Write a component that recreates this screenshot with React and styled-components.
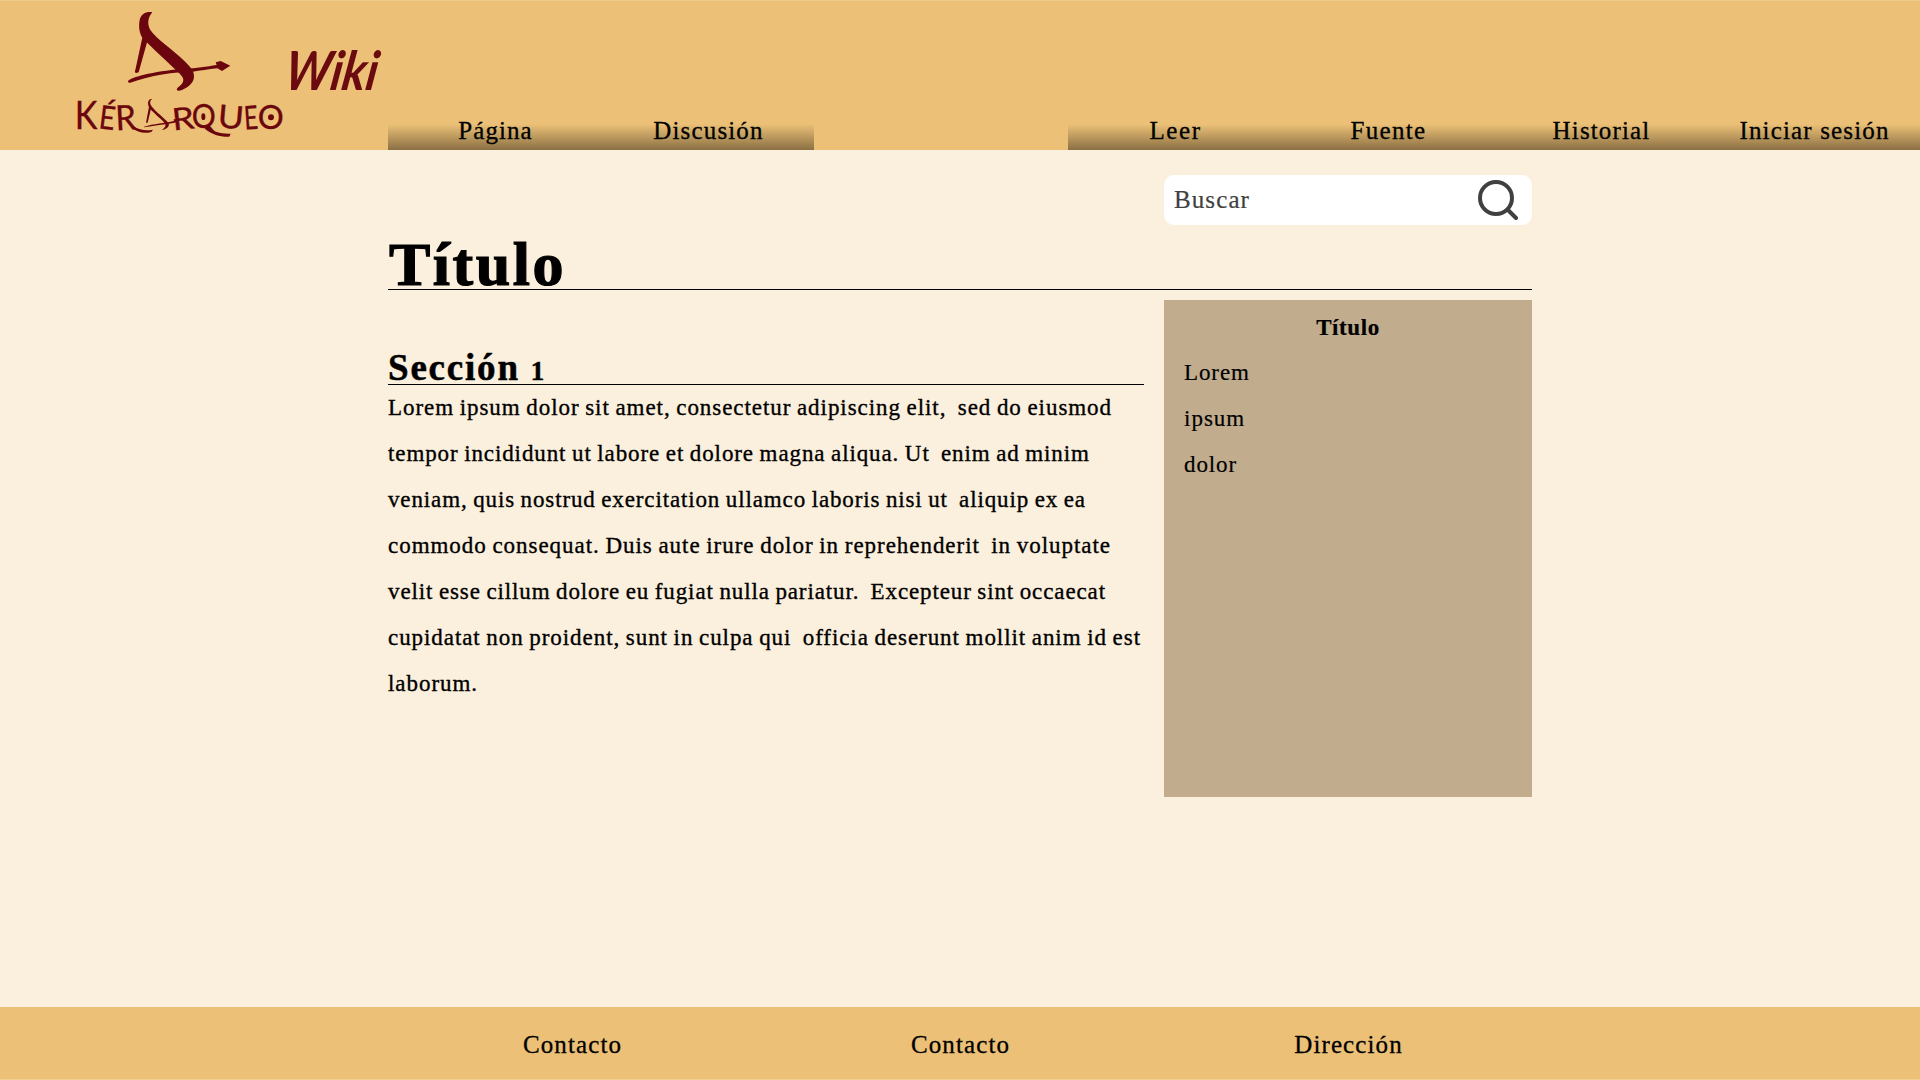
import React from "react";
import styled, { createGlobalStyle } from "styled-components";

const GlobalStyle = createGlobalStyle`
  * { box-sizing: border-box; }
  body {
    margin: 0;
    background: #fbefdd;
    color: #000;
    font-family: "Liberation Serif", serif;
  }
`;

const Page = styled.div`
  height: 1080px;
  display: flex;
  flex-direction: column;
  overflow: hidden;
`;

const Header = styled.header`
  height: 150px;
  flex: none;
  display: flex;
  align-items: flex-end;
  background: #ecc177;
  border-top: 1px solid #efcb8a;
`;

const Brand = styled.div`
  width: 388px;
  height: 149px;
  padding-left: 60px;
  display: flex;
`;

const LogoArt = styled.svg`
  width: 227px;
  height: 149px;
  flex: none;
  fill: #6b060e;

  text {
    font-family: Lato, sans-serif;
    stroke: #6b060e;
    stroke-width: 1;
  }
`;

const WikiName = styled.span`
  margin: 37px 0 0 -5px;
  font: italic bold 54px/64px Lato, sans-serif;
  color: #6b0a0f;
  transform-origin: 0 50%;
  transform: skewX(-9deg) scaleX(0.88);
`;

const Tabs = styled.nav`
  width: ${(p) => p.$count * 213}px;
  height: 26px;
  margin-left: ${(p) => p.$offset || 0}px;
  display: flex;
  background: linear-gradient(#ecc177, #8b7044);
`;

const Tab = styled.a`
  flex: 1;
  padding-left: 2px;
  text-align: center;
  font-size: 25px;
  line-height: 14px;
  letter-spacing: ${(p) => p.$track}px;
  -webkit-text-stroke: 0.3px #000;
`;

const Main = styled.main`
  flex: 1;
  width: 1144px;
  margin-left: 388px;
  padding-top: 25px;
`;

const SearchBox = styled.div`
  width: 368px;
  height: 50px;
  margin-left: auto;
  padding: 0 14px 0 10px;
  display: flex;
  align-items: center;
  justify-content: space-between;
  background: #fff;
  border-radius: 10px;
  color: #404040;
  font-size: 25px;
  letter-spacing: 1.1px;
  -webkit-text-stroke: 0.2px #404040;
`;

const SearchIcon = styled.svg`
  width: 40px;
  height: 40px;
  fill: none;
  stroke: #404040;
  stroke-width: 4;
  stroke-linecap: round;
`;

const PageTitle = styled.h1`
  margin: 15px 0 0;
  padding-left: 1px;
  border-bottom: 1px solid #000;
  font-size: 62px;
  line-height: 49px;
  letter-spacing: 2.5px;
  -webkit-text-stroke: 1.2px #000;
`;

const Columns = styled.div`
  display: flex;
  gap: 20px;
  padding-top: 10px;
`;

const Article = styled.article`
  width: 756px;
  padding-top: 52px;
`;

const SectionTitle = styled.h2`
  margin: 0;
  height: 33px;
  border-bottom: 1px solid #000;
  font-size: 37px;
  line-height: 32px;
  letter-spacing: 1.8px;
  white-space: nowrap;
  -webkit-text-stroke: 0.5px #000;
`;

const OldStyleFigure = styled.span`
  font-size: 27px;
`;

const Paragraph = styled.p`
  margin: 0;
  font-size: 23px;
  line-height: 46px;
  word-spacing: -1px;
  white-space: pre;
  -webkit-text-stroke: 0.35px #000;
`;

const Line = styled.span`
  display: block;
  letter-spacing: ${(p) => p.$track}px;
`;

const InfoBox = styled.aside`
  width: 368px;
  height: 497px;
  padding: 5px 20px;
  background: #c1ad8e;
  font-size: 23px;
  line-height: 46px;
  -webkit-text-stroke: 0.2px #000;
`;

const InfoTitle = styled.h3`
  margin: 0;
  font-size: 23px;
  line-height: 45px;
  letter-spacing: 0.6px;
  text-align: center;
`;

const Footer = styled.footer`
  height: 73px;
  flex: none;
  padding: 3px 378px 0;
  display: grid;
  grid-template-columns: repeat(3, 388px);
  align-items: center;
  background: #ecc177;
  border-bottom: 1px solid #f0cd90;
`;

const FooterLink = styled.a`
  padding-left: 1px;
  text-align: center;
  font-size: 25px;
  letter-spacing: 1.1px;
  -webkit-text-stroke: 0.3px #000;
`;

const letters = [
  { c: "K", x: 44, y: 387, size: 118, w: 68 },
  { c: "É", x: 118, y: 388, size: 98, w: 48, tilt: 7 },
  { c: "R", x: 166, y: 390, size: 104, w: 62, tilt: -3 },
  { c: "R", x: 336, y: 388, size: 92, w: 66, tilt: -6 },
  { c: "Q", x: 395, y: 385, size: 100, w: 72 },
  { c: "U", x: 474, y: 385, size: 96, w: 78, tilt: 5 },
  { c: "E", x: 552, y: 388, size: 98, w: 42, tilt: -4 },
  { c: "O", x: 593, y: 386, size: 98, w: 78 },
];

const pageTabs = [
  ["Página", 1.05],
  ["Discusión", 1.15],
];

const actionTabs = [
  ["Leer", 1.6],
  ["Fuente", 1.35],
  ["Historial", 1.15],
  ["Iniciar sesión", 1.15],
];

const lines = [
  ["Lorem ipsum dolor sit amet, consectetur adipiscing elit,  sed do eiusmod", 0.937],
  ["tempor incididunt ut labore et dolore magna aliqua. Ut  enim ad minim", 0.894],
  ["veniam, quis nostrud exercitation ullamco laboris nisi ut  aliquip ex ea", 0.868],
  ["commodo consequat. Duis aute irure dolor in reprehenderit  in voluptate", 0.959],
  ["velit esse cillum dolore eu fugiat nulla pariatur.  Excepteur sint occaecat", 0.88],
  ["cupidatat non proident, sunt in culpa qui  officia deserunt mollit anim id est", 0.932],
  ["laborum.", 0.95],
];

function Logo() {
  return (
    <LogoArt viewBox="0 3 681 447">
      <path d="M277 37C262 33 243 40 239 60C235 82 239 100 247 113C268 136 330 192 358 220C376 238 374 248 352 264C347 272 354 275 366 270C386 260 403 248 402 227C402 211 390 200 370 180C340 150 290 118 271 90C262 75 262 54 277 37Z" />
      <path d="M248 108L226 210Q222 218 229 219L236 217L264 116Z" />
      <path d="M204 243C210 234 240 227 264 221C300 214 340 208 372 206C410 205 440 200 470 195L467 187L482 183L511 197L486 213L472 205C445 208 420 212 398 215C345 215 270 226 211 248Q203 250 204 243Z" />
      {letters.map((l) => (
        <text
          key={l.x}
          x={l.x}
          y={l.y}
          fontSize={l.size}
          textLength={l.w}
          lengthAdjust="spacingAndGlyphs"
          transform={`rotate(${l.tilt || 0} ${l.x + l.w / 2} ${l.y - 35})`}
        >
          {l.c}
        </text>
      ))}
      <path d="M278 296C260 296 262 316 270 326C286 344 308 360 316 372C318 380 312 385 306 390C318 389 330 380 326 370C312 352 286 335 274 318C268 308 270 300 278 296Z" />
      <path d="M267 320L258 368L263 368L273 326Z" />
      <path d="M252 380C280 371 315 370 342 363L341 357L358 361L344 368C315 374 280 376 252 382Z" />
      <path d="M220 378C238 390 258 394 279 389L274 396C252 402 232 397 216 384Z" />
      <path d="M440 378C462 396 482 402 512 401L508 410C480 411 458 404 434 386Z" />
      <ellipse cx="430" cy="350" rx="6" ry="10" />
      <circle cx="633" cy="352" r="9" />
    </LogoArt>
  );
}

export default function App() {
  return (
    <Page>
      <GlobalStyle />
      <Header>
        <Brand>
          <Logo />
          <WikiName>Wiki</WikiName>
        </Brand>
        <Tabs $count={2}>
          {pageTabs.map(([label, track]) => (
            <Tab key={label} $track={track}>{label}</Tab>
          ))}
        </Tabs>
        <Tabs $count={4} $offset={254}>
          {actionTabs.map(([label, track]) => (
            <Tab key={label} $track={track}>{label}</Tab>
          ))}
        </Tabs>
      </Header>
      <Main>
        <SearchBox>
          Buscar
          <SearchIcon viewBox="0 0 40 40">
            <circle cx="18" cy="18" r="16" />
            <path d="M30 30L38 38" />
          </SearchIcon>
        </SearchBox>
        <PageTitle>Título</PageTitle>
        <Columns>
          <Article>
            <SectionTitle>
              Sección <OldStyleFigure>1</OldStyleFigure>
            </SectionTitle>
            <Paragraph>
              {lines.map(([text, track]) => (
                <Line key={text} $track={track}>{text}</Line>
              ))}
            </Paragraph>
          </Article>
          <InfoBox>
            <InfoTitle>Título</InfoTitle>
            <Line $track={0.9}>Lorem</Line>
            <Line $track={1}>ipsum</Line>
            <Line $track={0.9}>dolor</Line>
          </InfoBox>
        </Columns>
      </Main>
      <Footer>
        <FooterLink>Contacto</FooterLink>
        <FooterLink>Contacto</FooterLink>
        <FooterLink>Dirección</FooterLink>
      </Footer>
    </Page>
  );
}
